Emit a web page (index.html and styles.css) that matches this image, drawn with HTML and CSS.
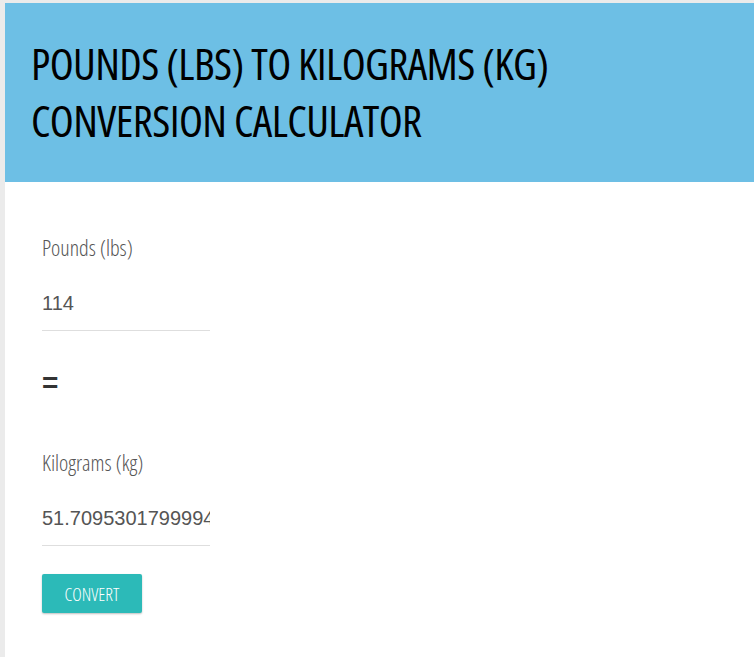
FILE: index.html
```html
<!doctype html>
<html lang="en">
  <head>
    <meta charset="UTF-8" />
    <meta name="viewport" content="width=device-width, initial-scale=1.0" />
    <title>Pounds to Kilograms</title>
    <link rel="stylesheet" href="styles.css">
  </head>
  <body>
    <div class="card">
      <header class="card-header">
        <h1 class="title">POUNDS (LBS) TO KILOGRAMS (KG) CONVERSION CALCULATOR</h1>
      </header>
      <form class="converter">
        <div class="field">
          <label class="field-label" for="lbs">Pounds (lbs)</label>
          <input class="field-input" id="lbs" type="text" value="114" />
        </div>
        <div class="equals">=</div>
        <div class="field">
          <label class="field-label" for="kg">Kilograms (kg)</label>
          <input class="field-input" id="kg" type="text" value="51.7095301799994" />
        </div>
        <button class="btn" type="button">CONVERT</button>
      </form>
    </div>
  </body>
</html>
```

FILE: styles.css
```css
html,
body {
  margin: 0;
  background: #ebebeb;
}
body {
  padding: 3px 0 0 5px;
  font-family: "Open Sans", "Liberation Sans", sans-serif;
}
.card {
  background: #fff;
  min-height: 654px;
}
.card-header {
  background: #6dbfe5;
  height: 179px;
  box-sizing: border-box;
  padding: 32px 26px 0;
}
.title {
  margin: 0;
  max-width: 560px;
  font-family: "Open Sans", sans-serif;
  font-stretch: 75%;
  font-weight: 400;
  font-size: 44px;
  line-height: 57px;
  color: #000;
  letter-spacing: -0.6px;
}
.converter {
  display: flex;
  flex-direction: column;
  align-items: flex-start;
  padding: 50px 37px 0;
}
.field {
  display: flex;
  flex-direction: column;
}
.field-label {
  font-family: "Open Sans", sans-serif;
  font-stretch: 75%;
  font-weight: 300;
  font-size: 22px;
  line-height: 30px;
  color: #555;
}
.field-input {
  width: 168px;
  box-sizing: border-box;
  margin-top: 29px;
  padding: 0 0 15px;
  border: 0;
  border-bottom: 1px solid #dedede;
  outline: none;
  background: transparent;
  font-family: "Liberation Sans", Arial, sans-serif;
  font-size: 20px;
  line-height: 24px;
  color: #555;
}
.equals {
  margin: 34px 0 46px;
  font-family: "Liberation Sans", Arial, sans-serif;
  font-weight: 700;
  font-size: 28px;
  line-height: 36px;
  color: #333;
}
.btn {
  margin-top: 28px;
  width: 100px;
  height: 39px;
  border: 0;
  border-radius: 2px;
  background: #2cbab8;
  color: #fff;
  font-family: "Open Sans", sans-serif;
  font-stretch: 75%;
  font-weight: 300;
  font-size: 18px;
  box-shadow: 0 1px 2px rgba(0, 0, 0, 0.25);
  cursor: pointer;
}
```
